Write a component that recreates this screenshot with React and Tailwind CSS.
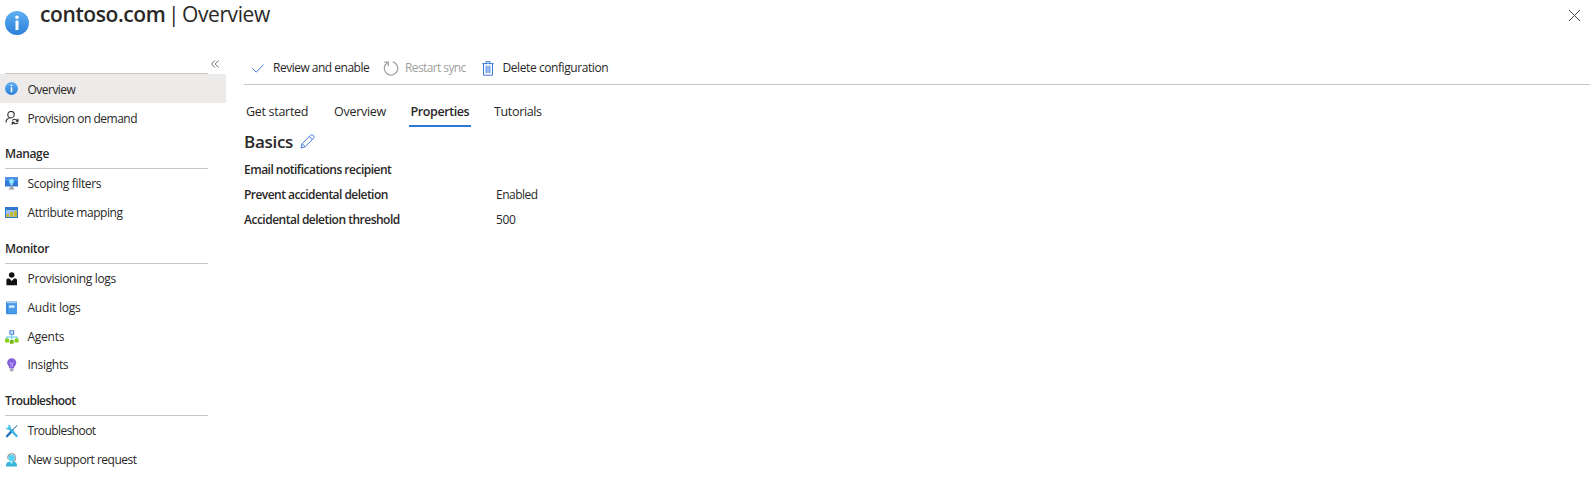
import React from "react";

const InfoIcon = ({ className }) => (
  <svg className={className} viewBox="0 0 24 24">
    <defs>
      <linearGradient id="info" x1="0" y1="0" x2="0" y2="1">
        <stop offset="0" stopColor="#5fb0f3" />
        <stop offset="1" stopColor="#2b7fd8" />
      </linearGradient>
    </defs>
    <circle cx="12" cy="12" r="12" fill="url(#info)" />
    <circle cx="12" cy="6.2" r="1.8" fill="#fff" />
    <rect x="10.5" y="9.5" width="3" height="9.5" rx="0.6" fill="#fff" />
  </svg>
);

const Svg = ({ children }) => (
  <svg className="size-[14px] shrink-0" viewBox="0 0 14 14" fill="none">{children}</svg>
);

const icons = {
  info: <InfoIcon className="size-[13px] shrink-0" />,
  provision: (
    <Svg>
      <circle cx="6" cy="3.700" r="3.200" stroke="#2b2b2b" strokeWidth="1.100" />
      <path d="M1 11.600c0-2.800 1.400-4.300 3.900-4.800" stroke="#2b2b2b" strokeWidth="1.100" />
      <path d="M7.300 9.600c.5-1.500 3.800-2 5.200.2M13 7.700v2.400h-2.300M12.900 11.400c-.9 1.800-3.900 1.900-5.100 0M7.200 13.700v-2.400h2.300" stroke="#2b2b2b" strokeWidth="1.100" />
    </Svg>
  ),
  monitor: (
    <Svg>
      <path d="M0 0h13v9.500H0z" fill="#3079d8" />
      <path d="M0 0h13v4H0z" fill="#4d94e8" />
      <path d="M5 9.500h3l.6 2.200h1v.8H3.500v-.8h1z" fill="#9aa0a6" />
      <circle cx="6.500" cy="4.500" r="2.400" fill="#8eeaff" />
      <path d="M5.600 6.700h1.800v1.500H5.600z" fill="#d7f7ff" />
    </Svg>
  ),
  table: (
    <Svg>
      <path d="M0 1h13v11H0z" fill="#2f78cc" />
      <path d="M1 4h11v7H1z" fill="#9fc2ee" />
      <path d="M1 8h3v3H1zM5 6h3v5H5zM9 5h3v6H9z" fill="#c3b935" shapeRendering="crispEdges" />
    </Svg>
  ),
  person: (
    <Svg>
      <circle cx="6.700" cy="3" r="2.800" fill="#111" />
      <path d="M1.400 13.200V8.300c0-1.300.7-1.900 1.900-1.900h1l2.400 2.500 2.400-2.500h1c1.200 0 1.900.6 1.900 1.900v4.900z" fill="#111" />
    </Svg>
  ),
  book: (
    <Svg>
      <path d="M2.300.5h9.600v12.800H2.300A1.300 1.300 0 0 1 1 12V1.800A1.300 1.300 0 0 1 2.300.5z" fill="#3b8ade" />
      <path d="M2 1h9.600v1.400H2z" fill="#a9d0f5" />
      <path d="M2.800 2.400h9.100v9.800H2.800z" fill="#4a9ce9" />
      <path d="M4 4.500h5.500v2.200H4z" fill="#e8f4ff" />
    </Svg>
  ),
  agents: (
    <Svg>
      <path d="M6.700 4.500v5M2 9.500V7h9.700v2.500" stroke="#5cc8ee" strokeWidth="1.100" />
      <path d="M4.900 .8h3.700v3.500H4.900z" fill="#dcebff" stroke="#4a82d8" strokeWidth="1.100" />
      <rect x="0" y="8.500" width="4" height="3.900" rx=".6" fill="#86cf1f" />
      <rect x="4.800" y="9.900" width="3.900" height="3.900" rx=".6" fill="#74b814" />
      <rect x="9.600" y="8.500" width="4" height="3.900" rx=".6" fill="#86cf1f" />
    </Svg>
  ),
  bulb: (
    <Svg>
      <path d="M6.700.3a4.600 4.600 0 0 0-4.600 4.500c0 2.400 2.100 3.300 2.400 5.600h4.400c.3-2.300 2.400-3.200 2.400-5.600A4.600 4.600 0 0 0 6.700.3z" fill="#8460dd" />
      <path d="M4.300 4.200c1 0 1.500.4 1.600 1.600V9M9.100 4.200c-1 0-1.500.4-1.600 1.600V9M5.500 5.500h2.400" stroke="#c9b5fa" strokeWidth=".7" />
      <path d="M4.900 10.800h3.600v1.700l-.9.900H5.800l-.9-.9z" fill="#a9a9b3" />
    </Svg>
  ),
  tools: (
    <Svg>
      <path d="M12.200 1.300 8 5.600" stroke="#5a8fae" strokeWidth="1.100" />
      <path d="M7.400 6.400 2 12.200" stroke="#2672b8" strokeWidth="2.400" strokeLinecap="round" />
      <path d="m4 4 7.600 8" stroke="#38b3e2" strokeWidth="2.300" strokeLinecap="round" />
      <path d="M3 .8c1.900-.3 3.200 1.400 2.700 3.100C5 5.800 2.700 6.200 1.300 5L.9 3.200l1.700 1 1.300-1.300z" fill="#45bfe9" />
    </Svg>
  ),
  support: (
    <Svg>
      <path d="M2.800 5.800V4.500C2.800 2.200 4.400.8 6.500.8s3.800 1.400 3.800 3.700v1.300c0 1.800-1 2.700-2.700 2.900" stroke="#858b91" strokeWidth="1.100" />
      <circle cx="6.500" cy="4.900" r="3.200" fill="#55d3f7" />
      <path d="M1 13.400c0-3 .8-4.500 2.900-4.700h5.200c2.100.2 2.900 1.700 2.900 4.700z" fill="#36b3dc" />
      <path d="M4.800 8h3.400l-1.700 3.800z" fill="#a6ecff" />
    </Svg>
  ),
};

function Item({ icon, label, className = "h-[29px]", text }) {
  return (
    <li className={`flex items-center gap-[8.5px] pl-[5px] ${className}`}>
      <span className="flex w-[14px]">{icons[icon]}</span>
      <span className={text}>{label}</span>
    </li>
  );
}

function Heading({ children, className }) {
  return (
    <h2 className={`mr-[18px] ml-[5px] flex h-[37px] items-center border-b border-[#c8c6c4] pt-[8px] font-semibold ${className}`}>
      {children}
    </h2>
  );
}

const RestartIcon = () => (
  <svg className="h-[15px] w-4" viewBox="0 0 16 15" fill="none" stroke="#a19f9d" strokeWidth="1.200">
    <path d="M9.800.9A6.700 6.700 0 1 1 4.300 1.800M1.300 1.200h4v4" />
  </svg>
);

const TrashIcon = () => (
  <svg className="mt-px h-[15px] w-3" viewBox="0 0 12 15" fill="none" stroke="#3f78dc" strokeWidth="1">
    <path d="M.3 2.600h11.400M4 2.500V.7h4v1.800M1.500 2.800v11.400h9V2.800M4.200 4.800v7.400M6 4.800v7.400M7.800 4.800v7.400" />
  </svg>
);

export default function App() {
  return (
    <div className="flex h-[494px] w-[1595px] flex-col overflow-hidden bg-white font-['Open_Sans',sans-serif] text-[12px] leading-4 whitespace-nowrap text-[#292827]">
      <header className="flex h-[56px] shrink-0 items-start">
        <InfoIcon className="mt-[11px] ml-[5px] size-6" />
        <h1 className="ml-[11px] flex text-[21px] leading-[29px]">
          <span className="w-[128px] font-semibold tracking-[-0.4px]">contoso.com</span>
          <span className="w-[14px]">|</span>
          <span className="tracking-[-0.4px]">Overview</span>
        </h1>
        <svg className="mt-[10px] mr-[15px] ml-auto size-[11px]" viewBox="0 0 11 11" fill="none" stroke="#444" strokeWidth="1">
          <path d="m0 0 11 11M11 0 0 11" />
        </svg>
      </header>

      <div className="flex flex-1">
        <nav className="w-[226px] shrink-0">
          <div className="flex h-[18px]">
            <div className="ml-[5px] w-[203px] border-b border-[#c8c6c4]" />
            <svg className="mt-[4px] ml-[2.5px] h-[8px] w-[8px]" viewBox="0 0 8 8" fill="none" stroke="#605e5c" strokeWidth=".9">
              <path d="M3.800.6.600 4l3.200 3.400M7.400.6 4.200 4l3.200 3.400" />
            </svg>
          </div>
          <ul>
            <Item icon="info" label="Overview" className="h-[29px] bg-[#edebe9]" text="mt-[2px] tracking-[-0.52px]" />
            <Item icon="provision" label="Provision on demand" text="mt-[2px] tracking-[-0.5px]" />
          </ul>
          <Heading className="tracking-[-0.37px]">Manage</Heading>
          <ul>
            <Item icon="monitor" label="Scoping filters" text="tracking-[-0.33px]" />
            <Item icon="table" label="Attribute mapping" text="tracking-[-0.42px]" />
          </ul>
          <Heading className="tracking-[-0.37px]">Monitor</Heading>
          <ul>
            <Item icon="person" label="Provisioning logs" text="tracking-[-0.34px]" />
            <Item icon="book" label="Audit logs" text="tracking-[-0.22px]" />
            <Item icon="agents" label="Agents" text="tracking-[-0.25px]" />
            <Item icon="bulb" label="Insights" className="h-[28px]" text="tracking-[-0.32px]" />
          </ul>
          <Heading className="tracking-[-0.6px]">Troubleshoot</Heading>
          <ul>
            <Item icon="tools" label="Troubleshoot" text="tracking-[-0.58px]" />
            <Item icon="support" label="New support request" text="tracking-[-0.5px]" />
          </ul>
        </nav>

        <main className="ml-[18px] w-[1346px]">
          <div className="flex h-[29px] items-center border-b border-[#c8c6c4] pb-1">
            <div className="flex w-[139px] items-center gap-[9px] pl-2">
              <svg className="h-[9px] w-3" viewBox="0 0 12 9" fill="none" stroke="#3f78dc" strokeWidth="1">
                <path d="m.5 4.500 3.700 3.700L11.600.600" />
              </svg>
              <span className="tracking-[-0.5px]">Review and enable</span>
            </div>
            <div className="flex w-[98px] items-center gap-[6px] text-[#a19f9d]">
              <RestartIcon />
              <span className="tracking-[-0.6px]">Restart sync</span>
            </div>
            <div className="flex items-center gap-[9px] pl-[0.5px]">
              <TrashIcon />
              <span className="tracking-[-0.42px]">Delete configuration</span>
            </div>
          </div>

          <div className="mt-[17px] flex h-[25px] items-start text-[12.5px] leading-[19px]">
            <span className="w-[87px] pl-[2px] tracking-[-0.3px]">Get started</span>
            <span className="w-[78px] pl-[3px] tracking-[-0.27px]">Overview</span>
            <span className="h-[25px] w-[62px] border-b-2 border-[#2b78d6] pl-[1.5px] font-semibold tracking-[-0.4px]">Properties</span>
            <span className="pl-[23px] tracking-[-0.35px]">Tutorials</span>
          </div>

          <div className="mt-[3px] flex h-6 items-center">
            <h2 className="text-[17px] leading-6 font-semibold tracking-[-0.3px]">Basics</h2>
            <svg className="mb-px ml-[7px] size-[15px]" viewBox="0 0 15 15" fill="none" stroke="#3f78dc" strokeWidth="1">
              <path d="M1 14l1.100-4.300L10.700 1.200c1.700-1.400 4.300 1 3 2.900L5.200 12.700zM2.100 9.700l3.100 3M9.300 2.600l3.100 3.100" />
            </svg>
          </div>

          <dl className="mt-[3px] grid auto-rows-[25px] grid-cols-[252px_auto] items-center">
            <dt className="font-semibold tracking-[-0.51px]">Email notifications recipient</dt>
            <dd />
            <dt className="font-semibold tracking-[-0.54px]">Prevent accidental deletion</dt>
            <dd className="tracking-[-0.5px]">Enabled</dd>
            <dt className="font-semibold tracking-[-0.5px]">Accidental deletion threshold</dt>
            <dd className="tracking-[-0.4px]">500</dd>
          </dl>
        </main>
      </div>
    </div>
  );
}
